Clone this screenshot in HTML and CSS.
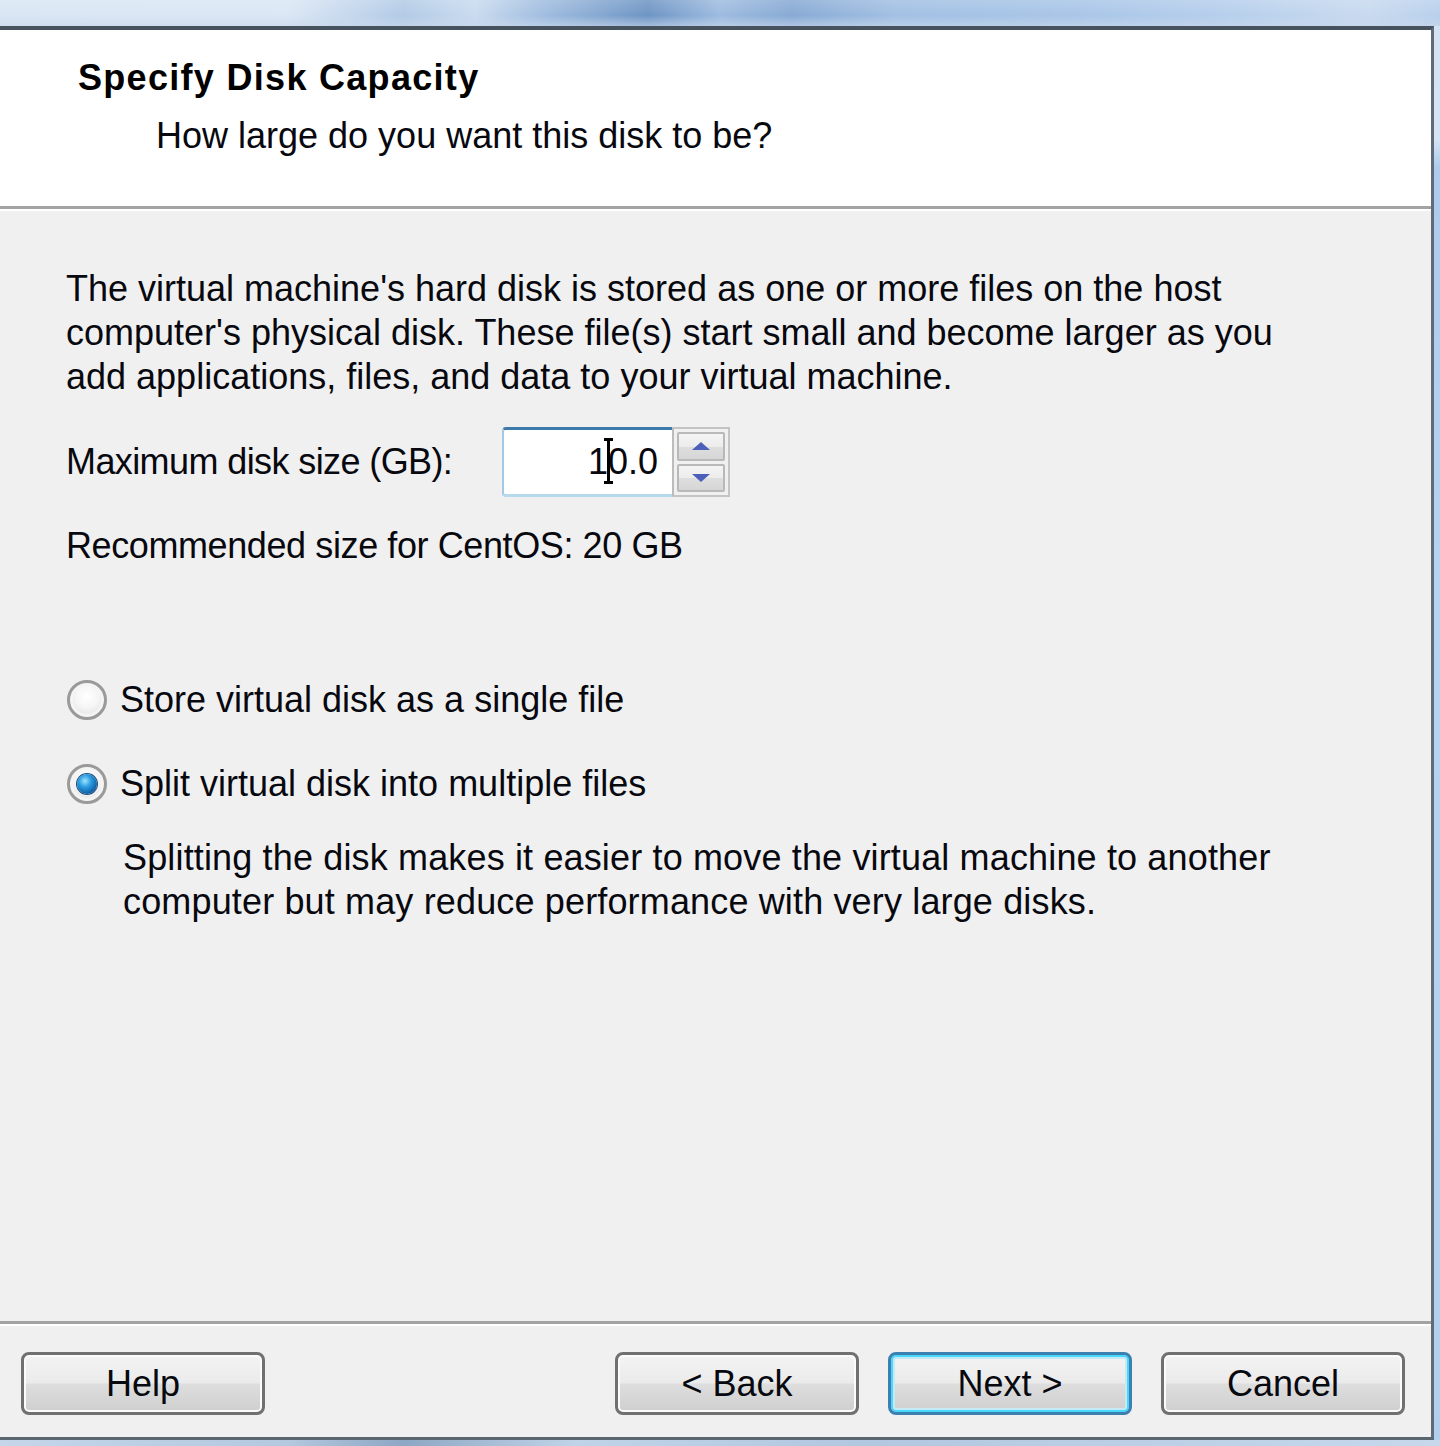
FILE: index.html
```html
<!DOCTYPE html>
<html lang="en">
<head>
<meta charset="utf-8">
<title>Specify Disk Capacity</title>
<link rel="stylesheet" href="styles.css">
</head>
<body>
<div class="screen">
  <div class="glass-top"></div>
  <div class="dialog-row">
    <div class="dialog">
      <header class="wiz-head">
        <h1 class="wiz-title">Specify Disk Capacity</h1>
        <p class="wiz-subtitle">How large do you want this disk to be?</p>
      </header>
      <main class="wiz-body">
        <p class="intro">The virtual machine's hard disk is stored as one or more files on the host<br>computer's physical disk. These file(s) start small and become larger as you<br>add applications, files, and data to your virtual machine.</p>
        <div class="size-row">
          <span class="size-label">Maximum disk size (GB):</span>
          <div class="spin">
            <div class="spin-field">
              <span class="spin-value">10.0</span>
              <span class="ibeam"></span>
            </div>
            <div class="spin-buttons">
              <div class="spin-btn"><svg width="18" height="8" viewBox="0 0 18 8"><polygon points="9,0 18,8 0,8" fill="#4d5fb8"/></svg></div>
              <div class="spin-btn"><svg width="18" height="8" viewBox="0 0 18 8"><polygon points="0,0 18,0 9,8" fill="#4d5fb8"/></svg></div>
            </div>
          </div>
        </div>
        <p class="recommend">Recommended size for CentOS: 20 GB</p>
        <div class="radio-row first">
          <span class="radio"></span>
          <span class="radio-label">Store virtual disk as a single file</span>
        </div>
        <div class="radio-row second">
          <span class="radio checked"><span class="dot"></span></span>
          <span class="radio-label">Split virtual disk into multiple files</span>
        </div>
        <p class="split-desc">Splitting the disk makes it easier to move the virtual machine to another<br>computer but may reduce performance with very large disks.</p>
      </main>
      <footer class="wiz-foot">
        <button class="btn">Help</button>
        <div class="foot-right">
          <button class="btn">&lt; Back</button>
          <button class="btn default">Next &gt;</button>
          <button class="btn">Cancel</button>
        </div>
      </footer>
    </div>
    <div class="glass-side"></div>
  </div>
  <div class="glass-bottom"></div>
</div>
</body>
</html>
```

FILE: styles.css
```css
* { box-sizing: border-box; }

html, body {
  margin: 0;
  padding: 0;
}

body {
  width: 1440px;
  height: 1446px;
  overflow: hidden;
  background: #b4cde9;
  font-family: "Liberation Sans", Arial, sans-serif;
  font-size: 36px;
  color: #08080f;
}

.screen {
  width: 1440px;
  height: 1446px;
  display: flex;
  flex-direction: column;
}

.glass-top {
  height: 26px;
  flex: none;
  background:
    linear-gradient(180deg, rgba(255,255,255,0.15) 0%, rgba(255,255,255,0) 60%, rgba(200,215,235,0.6) 100%),
    linear-gradient(90deg, #d9e6f4 0%, #dbe7f5 20%, #b3cbe6 28%, #c9dbef 33%, #9fbcdf 38%, #6e95c4 45%, #9ebce0 50%, #88aad4 55%, #a2c0e3 62%, #a9c6e8 75%, #b6cfec 85%, #c8daef 95%, #b9d0ec 100%);
}

.dialog-row {
  flex: 1;
  display: flex;
}

.dialog {
  width: 1434px;
  flex: none;
  display: flex;
  flex-direction: column;
  border-top: 4px solid #46525e;
  border-right: 3px solid #5f6b78;
  border-bottom: 3px solid #59656f;
  background: #f0f0f0;
}

.glass-side {
  flex: 1;
  background: linear-gradient(180deg, #d3e3f4 0%, #d6e5f5 8%, #aecbed 10%, #b8d3f1 40%, #b3cfee 100%);
}

.glass-bottom {
  height: 6px;
  flex: none;
  background: linear-gradient(90deg, #c5d6ea 0%, #b4c8df 20%, #8ea7c4 28%, #c0d3e8 40%, #b2c7e0 60%, #c7d8ec 100%);
}

/* header */
.wiz-head {
  height: 179px;
  flex: none;
  background: #ffffff;
  border-bottom: 3px solid #a3a3a3;
  box-shadow: 0 2px 0 #ffffff;
  padding: 26px 0 0 78px;
}

.wiz-title {
  margin: 0;
  font-size: 36px;
  line-height: 44px;
  font-weight: bold;
  letter-spacing: 1.3px;
  color: #000;
}

.wiz-subtitle {
  margin: 14px 0 0 78px;
  font-size: 36px;
  line-height: 44px;
}

/* body */
.wiz-body {
  flex: 1;
  padding: 58px 0 0 66px;
}

.intro {
  margin: 0;
  line-height: 44px;
}

.size-row {
  margin-top: 28px;
  display: flex;
  align-items: center;
  height: 70px;
}

.size-label {
  width: 436px;
  line-height: 44px;
  letter-spacing: -0.6px;
}

.spin {
  display: flex;
  height: 70px;
}

.spin-field {
  position: relative;
  width: 170px;
  height: 70px;
  background: #fff;
  border-top: 3px solid #3d7bad;
  border-left: 2px solid #a4c9e3;
  border-bottom: 3px solid #b7d9ed;
  border-right: none;
  border-radius: 4px 0 0 4px;
  display: flex;
  align-items: center;
  justify-content: flex-end;
  padding-right: 14px;
}

.spin-value {
  line-height: 44px;
}

.ibeam {
  position: absolute;
  left: 103px;
  top: 8px;
  width: 3px;
  height: 46px;
  background: #000;
}

.ibeam::before,
.ibeam::after {
  content: "";
  position: absolute;
  left: -3px;
  width: 9px;
  height: 3px;
  background: #000;
}

.ibeam::before { top: 0; }
.ibeam::after { bottom: 0; }

.spin-buttons {
  width: 58px;
  height: 70px;
  border: 2px solid #c4c4c4;
  border-left: 2px solid #bcbcbc;
  background: #f0f0f0;
  display: flex;
  flex-direction: column;
  gap: 3px;
  padding: 3px;
}

.spin-btn {
  flex: 1;
  border: 2px solid #b9b9b9;
  border-radius: 2px;
  background: linear-gradient(180deg, #f4f4f4 0%, #ececec 50%, #dedede 51%, #d6d6d6 100%);
  display: flex;
  align-items: center;
  justify-content: center;
}

.recommend {
  margin: 27px 0 0 0;
  line-height: 44px;
  letter-spacing: -0.4px;
}

.radio-row {
  display: flex;
  align-items: center;
  height: 44px;
}

.radio-row.first { margin-top: 110px; }
.radio-row.second { margin-top: 40px; }

.radio {
  width: 40px;
  height: 40px;
  margin-left: 1px;
  border-radius: 50%;
  border: 3px solid #9a9a9a;
  background: radial-gradient(circle at 50% 40%, #ffffff 0%, #f6f6f6 40%, #d9d9d9 100%);
  box-shadow: inset 0 0 0 3px #f4f4f4;
  display: flex;
  align-items: center;
  justify-content: center;
  flex: none;
}

.dot {
  width: 20px;
  height: 20px;
  border-radius: 50%;
  background: radial-gradient(circle at 40% 35%, #9fe4ff 0%, #2a9be0 35%, #0f5b9e 75%, #0d3e72 100%);
  box-shadow: 0 0 0 1px #1a4f80;
}

.radio-label {
  margin-left: 13px;
  line-height: 44px;
}

.split-desc {
  margin: 30px 0 0 57px;
  line-height: 44px;
  letter-spacing: 0.15px;
}

/* footer */
.wiz-foot {
  height: 116px;
  flex: none;
  border-top: 3px solid #a3a3a3;
  box-shadow: inset 0 2px 0 #ffffff;
  display: flex;
  justify-content: space-between;
  padding: 28px 26px 0 21px;
}

.foot-right {
  display: flex;
  gap: 29px;
}

.btn {
  width: 244px;
  height: 63px;
  border: 3px solid #707070;
  border-radius: 8px;
  background: linear-gradient(180deg, #f3f3f3 0%, #ebebeb 48%, #dddddd 52%, #cfcfcf 100%);
  box-shadow: inset 0 0 0 2px #fbfbfb;
  font-family: "Liberation Sans", Arial, sans-serif;
  font-size: 36px;
  color: #08080f;
  padding: 0;
  line-height: 44px;
}

.btn.default {
  border-color: #3c7fb1;
  box-shadow: inset 0 0 0 2px #48d8fb, inset 0 0 0 4px #c4eaf8;
}
```
